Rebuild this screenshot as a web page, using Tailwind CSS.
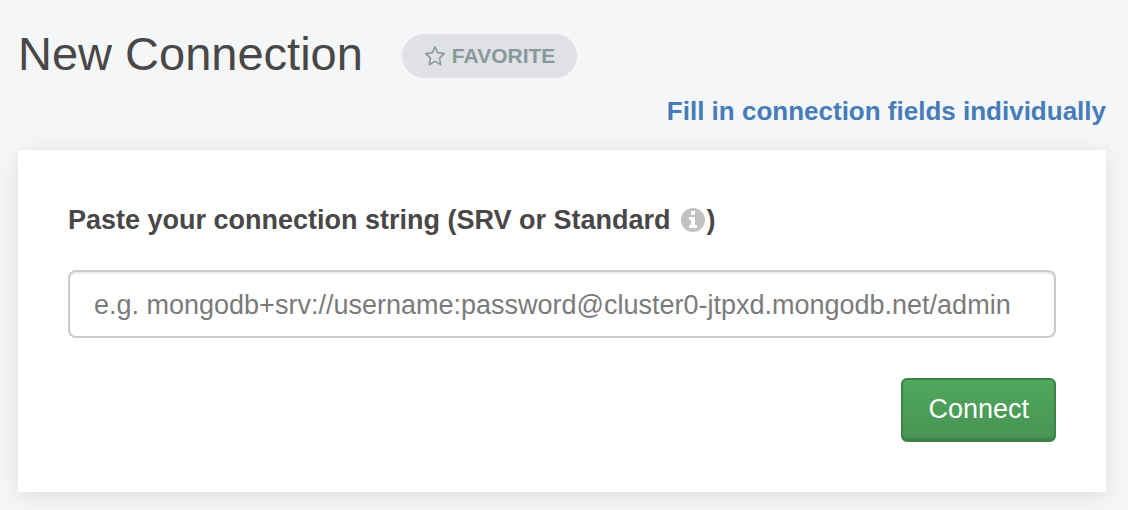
<!DOCTYPE html>
<html lang="en">
<head>
    <meta charset="UTF-8">
    <meta name="viewport" content="width=device-width, initial-scale=1.0">
    <title>New Connection</title>
    <script src="https://cdn.jsdelivr.net/npm/@tailwindcss/browser@4"></script>
</head>
<body class="font-['Liberation_Sans',Arial,sans-serif] bg-[#f5f6f8] text-[#494747] min-h-screen px-[18px] pt-6 pr-[22px] pb-[18px]">
    <header class="flex items-center gap-[39px]">
        <h1 class="text-[47px] leading-[60px]">New Connection</h1>
        <button type="button" class="flex items-center gap-1.5 h-11 mt-1 px-[22px] rounded-full bg-[#dfe1e5] text-[#89989b] text-[21px] font-bold">
            <svg class="w-[22px] h-[22px]" viewBox="0 0 22 22" fill="none" stroke="currentColor" stroke-width="1.6" stroke-linejoin="round" aria-hidden="true">
                <path d="M11 1.8l2.8 6 6.4.8-4.7 4.5 1.2 6.5-5.7-3.2-5.7 3.2 1.2-6.5-4.7-4.5 6.4-.8z"/>
            </svg>
            FAVORITE
        </button>
    </header>
    <div class="flex justify-end pt-2 pb-5">
        <a href="#" class="text-[26px] leading-[38px] font-bold text-[#467cb7]">Fill in connection fields individually</a>
    </div>
    <main class="bg-white px-[50px] py-[50px] shadow-[0_4px_20px_rgba(0,0,0,0.1)]">
        <form>
            <label for="connection-string" class="flex items-center text-[27px] leading-10 font-bold">
                Paste your connection string (SRV or Standard
                <svg class="w-6 h-6 ml-2.5" viewBox="0 0 24 24" aria-hidden="true">
                    <circle cx="12" cy="12" r="12" fill="#c1c1c1"/>
                    <path fill="#fff" d="M10 3h4v4h-4zM8 9h6v8h2v3H8v-3h2v-5H8z"/>
                </svg>
                <span class="ml-0.5">)</span>
            </label>
            <input id="connection-string" type="text" placeholder="e.g. mongodb+srv://username:password@cluster0-jtpxd.mongodb.net/admin" class="block w-full h-[68px] mt-[30px] px-6 pt-0.5 rounded-lg border-2 border-[#cbcbcb] bg-white text-[27px] placeholder:text-[#7b7b7b] shadow-[inset_0_2px_2px_rgba(0,0,0,0.08)] outline-none">
            <div class="flex justify-end mt-10">
                <button type="submit" class="h-16 px-[25px] rounded-md border-2 border-b-4 border-[#3d8249] bg-linear-to-b from-[#50a85d] to-[#489353] text-[27px] text-white">Connect</button>
            </div>
        </form>
    </main>
</body>
</html>
